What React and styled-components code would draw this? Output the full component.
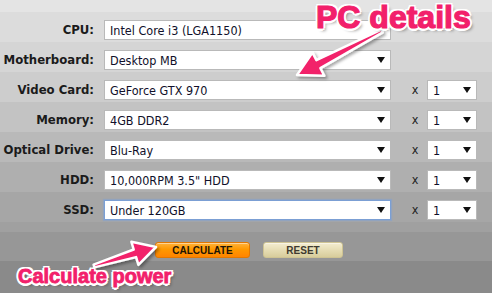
import React from "react";
import styled, { createGlobalStyle } from "styled-components";

const Global = createGlobalStyle`
  html, body { margin: 0; padding: 0; }
  body { width: 492px; height: 293px; overflow: hidden; background: #8a8a8a; }
`;

const Page = styled.div`
  position: relative;
  width: 492px;
  height: 293px;
  display: flex;
  flex-direction: column;
  font-family: "DejaVu Sans Condensed", "DejaVu Sans", sans-serif;
  font-stretch: condensed;
  overflow: hidden;
`;

const Header = styled.div`
  height: 12px;
  background: #e4e4e4;
`;

const Row = styled.div`
  height: 30px;
  box-sizing: border-box;
  padding-top: 8px;
  display: flex;
  align-items: flex-start;
  background: ${(p) => p.$bg};
`;

const Label = styled.div`
  width: 94px;
  height: 20px;
  line-height: 20px;
  margin-right: 10px;
  text-align: right;
  font-weight: bold;
  font-size: 13px;
  color: #1b1b1b;
  white-space: nowrap;
`;

const Select = styled.div`
  box-sizing: border-box;
  width: ${(p) => p.$w}px;
  height: 20px;
  background: #fff;
  border: 1px solid ${(p) => (p.$focus ? "#7b9fd4" : "#b9b9b9")};
  box-shadow: ${(p) => (p.$focus ? "0 0 1px 1px rgba(120,160,220,0.45)" : "none")};
  display: flex;
  align-items: center;
  justify-content: space-between;
  padding: 0 5px 0 5px;
  font-size: 12.5px;
  color: #10102a;
  white-space: nowrap;
`;

const Arrow = styled.svg`
  width: 8px;
  height: 6px;
  flex: none;
`;

const Times = styled.div`
  width: 36px;
  height: 20px;
  line-height: 19px;
  box-sizing: border-box;
  padding-left: 12px;
  text-align: center;
  font-size: 12.5px;
  color: #222;
`;

const Spacer = styled.div`
  height: 10px;
  background: #a0a0a0;
`;

const ButtonRow = styled.div`
  height: 29px;
  box-sizing: border-box;
  padding-top: 10px;
  padding-left: 155px;
  display: flex;
  align-items: flex-start;
  gap: 13px;
  background: #979797;
`;

const Footer = styled.div`
  flex: 1;
  background: #8a8a8a;
`;

const Btn = styled.div`
  box-sizing: border-box;
  width: ${(p) => p.$w}px;
  height: 16px;
  border-radius: 3px;
  display: flex;
  align-items: center;
  justify-content: center;
  font-family: "Liberation Sans", Arial, sans-serif;
  font-stretch: normal;
  font-weight: bold;
  font-size: 10px;
  border: 1px solid ${(p) => (p.$kind === "go" ? "#e27800" : "#cfc493")};
  background: ${(p) =>
    p.$kind === "go"
      ? "linear-gradient(#ffb23c 0%, #ff9900 45%, #ff8400 100%)"
      : "linear-gradient(#f4edd0 0%, #e6ddb4 50%, #d8cd9c 100%)"};
  color: ${(p) => (p.$kind === "go" ? "#1e1406" : "#3f3a30")};
  box-shadow: inset 0 1px 0 rgba(255, 255, 255, 0.45);
`;

const Overlay = styled.svg`
  position: absolute;
  left: 0;
  top: 0;
  width: 492px;
  height: 293px;
  pointer-events: none;
`;

const Note = styled.div`
  position: absolute;
  left: ${(p) => p.$x}px;
  top: ${(p) => p.$y}px;
  font-family: "Liberation Sans", Arial, sans-serif;
  font-stretch: normal;
  font-weight: bold;
  font-size: ${(p) => p.$size}px;
  line-height: ${(p) => p.$size}px;
  color: #f2206b;
  -webkit-text-stroke: ${(p) => p.$stroke}px #f2206b;
  white-space: nowrap;
  text-shadow:
    2.5px 0 0 #fff, -2.5px 0 0 #fff, 0 2.5px 0 #fff, 0 -2.5px 0 #fff,
    1.8px 1.8px 0 #fff, -1.8px 1.8px 0 #fff, 1.8px -1.8px 0 #fff, -1.8px -1.8px 0 #fff,
    3px 3px 3px rgba(0, 0, 0, 0.35);
`;

const Tri = () => (
  <Arrow viewBox="0 0 8 6">
    <path d="M0 0 H8 L4 6 Z" fill="#111" />
  </Arrow>
);

const rows = [
  { label: "CPU:", value: "Intel Core i3 (LGA1150)", qty: false, bg: "#dcdcdc", arrow: false },
  { label: "Motherboard:", value: "Desktop MB", qty: false, bg: "#d5d5d5" },
  { label: "Video Card:", value: "GeForce GTX 970", qty: true, bg: "#cdcdcd" },
  { label: "Memory:", value: "4GB DDR2", qty: true, bg: "#c3c3c3" },
  { label: "Optical Drive:", value: "Blu-Ray", qty: true, bg: "#b9b9b9" },
  { label: "HDD:", value: '10,000RPM 3.5" HDD', qty: true, bg: "#afafaf" },
  { label: "SSD:", value: "Under 120GB", qty: true, bg: "#a6a6a6", focus: true },
];

export default function App() {
  return (
    <>
      <Global />
      <Page>
        <Header />
        {rows.map((r) => (
          <Row key={r.label} $bg={r.bg}>
            <Label>{r.label}</Label>
            <Select $w={287} $focus={r.focus}>
              <span>{r.value}</span>
              {r.arrow !== false && <Tri />}
            </Select>
            {r.qty && (
              <>
                <Times>x</Times>
                <Select $w={50}>
                  <span>1</span>
                  <Tri />
                </Select>
              </>
            )}
          </Row>
        ))}
        <Spacer />
        <ButtonRow>
          <Btn $kind="go" $w={95}>CALCULATE</Btn>
          <Btn $kind="reset" $w={80}>RESET</Btn>
        </ButtonRow>
        <Footer />

        <Overlay viewBox="0 0 492 293">
          <defs>
            <filter id="sh" x="-20%" y="-20%" width="140%" height="140%">
              <feDropShadow dx="2" dy="2" stdDeviation="1.5" floodColor="#000" floodOpacity="0.35" />
            </filter>
          </defs>
          <path
            d="M381.3 29.7 L316.4 60.2 L312.5 52.6 L297 75 L324.3 75.8 L320.4 68.2 L382.7 32.3 Z"
            fill="#f2206b"
            stroke="#fff"
            strokeWidth="2.5"
            strokeLinejoin="round"
            filter="url(#sh)"
          />
          <path
            d="M93.6 264.6 L133.7 249.5 L131.4 241.8 L156 247 L138.4 264.8 L136.1 257.1 L94.4 267.4 Z"
            fill="#f2206b"
            stroke="#fff"
            strokeWidth="2.5"
            strokeLinejoin="round"
            filter="url(#sh)"
          />
        </Overlay>
        <Note $x={316} $y={1} $size={32} $stroke={1.2}>PC details</Note>
        <Note $x={18} $y={266} $size={20} $stroke={0.8}>Calculate power</Note>
      </Page>
    </>
  );
}
